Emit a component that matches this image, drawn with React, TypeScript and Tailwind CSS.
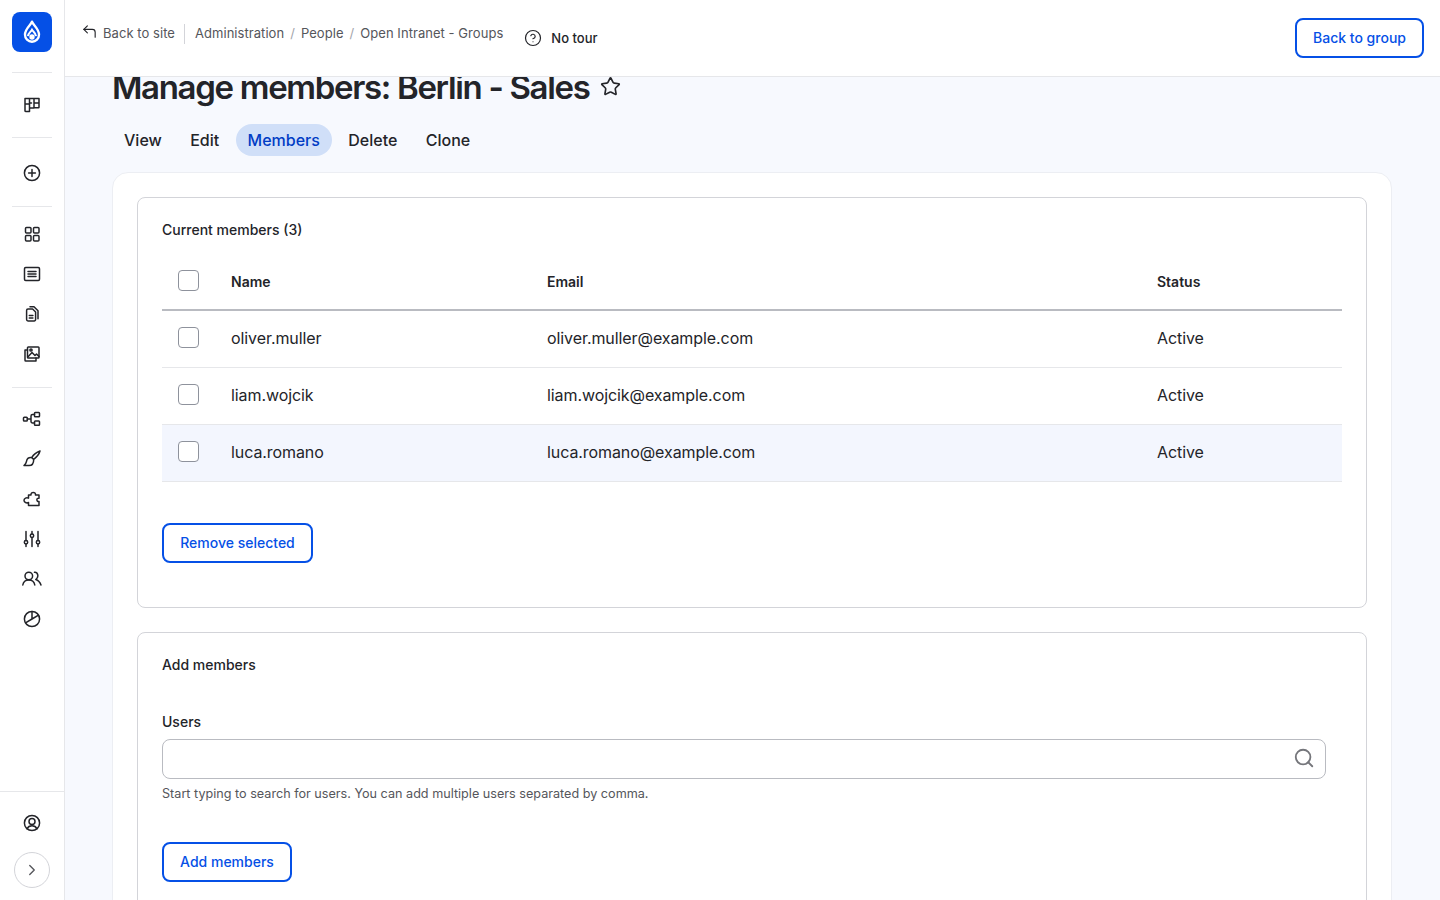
import React from 'react';
import { ChevronRight, CircleHelp, CornerUpLeft, Search, Star } from 'lucide-react';

const members = [
  { name: 'oliver.muller', email: 'oliver.muller@example.com', highlight: false },
  { name: 'liam.wojcik', email: 'liam.wojcik@example.com', highlight: false },
  { name: 'luca.romano', email: 'luca.romano@example.com', highlight: true },
];

const tabs = ['View', 'Edit', 'Members', 'Delete', 'Clone'];

const Icon = ({ children }: { children: React.ReactNode }) => (
  <svg width="20" height="20" viewBox="0 0 20 20" fill="none" stroke="#232429" strokeWidth="1.5" strokeLinecap="round" strokeLinejoin="round">
    {children}
  </svg>
);

const SideItem = ({ children }: { children: React.ReactNode }) => (
  <div className="h-10 flex items-center justify-center">{children}</div>
);

const Checkbox = () => <div className="w-[21px] h-[21px] bg-white border border-[#8e929c] rounded-[4px]" />;

const Button = ({ label, className }: { label: string; className: string }) => (
  <button className={`h-10 border-2 border-[#0550e6] rounded-lg bg-white text-sm font-medium text-[#0550e6] ${className}`}>
    {label}
  </button>
);

export default function App() {
  return (
    <div className="h-screen flex overflow-hidden bg-[#f7f9fe] text-[#232429] font-['Inter',sans-serif]">
      <aside className="w-[65px] shrink-0 flex flex-col bg-white border-r border-[#e6e7ea]">
        <div className="pt-3 px-3 h-[72px]">
          <div className="w-10 h-10 rounded-lg bg-[#0550e6] flex items-center justify-center">
            <svg width="18" height="24" viewBox="0 0 20 26" fill="none">
              <path d="M10 1.5C11 5 17.8 9 17.8 16a7.8 7.8 0 0 1-15.6 0C2.2 9 9 5 10 1.5Z" fill="none" stroke="#fff" strokeWidth="2.6" strokeLinejoin="round" />
              <path d="M5.5 17.5C6 14 9 12.5 10 10.5c1.2 2 4 3.5 4.5 7" stroke="#fff" strokeWidth="2.2" />
              <circle cx="10" cy="18.5" r="3" fill="#fff" />
            </svg>
          </div>
        </div>
        <div className="mx-3 border-t border-[#e6e7ea]" />
        <div className="h-[64px] flex items-center justify-center">
          <Icon>
            <path d="M3 3.5h4.5v13H3.6a.6.6 0 0 1-.6-.6V3.5ZM7.5 3.5H12V13H7.5ZM12 3.5h5v8.7a.6.6 0 0 1-.6.6H12ZM3 9h4.5M12 8h5M7.5 8h2" />
          </Icon>
        </div>
        <div className="mx-3 border-t border-[#e6e7ea]" />
        <div className="h-[68px] pt-[2px] flex items-center justify-center">
          <Icon>
            <circle cx="10" cy="10" r="7.6" />
            <path d="M10 6.6v6.8M6.6 10h6.8" />
          </Icon>
        </div>
        <div className="mx-3 border-t border-[#e6e7ea]" />
        <div className="pt-[7px] pb-[13px]">
          <SideItem>
            <Icon>
              <rect x="3.5" y="3.5" width="5.5" height="5.5" rx="1" />
              <rect x="11.5" y="3.5" width="5.5" height="5.5" rx="1" />
              <rect x="3.5" y="11.5" width="5.5" height="5.5" rx="1" />
              <rect x="11.5" y="11.5" width="5.5" height="5.5" rx="1" />
            </Icon>
          </SideItem>
          <SideItem>
            <Icon>
              <rect x="2.5" y="3.5" width="15" height="13" rx="1.2" />
              <path d="M6 7.5h8M6 10h8M6 12.5h8" />
            </Icon>
          </SideItem>
          <SideItem>
            <Icon>
              <path d="M8 2.8h4l4 4v8M6 5h4.6l3 3v7.6a1.4 1.4 0 0 1-1.4 1.4H6a1.4 1.4 0 0 1-1.4-1.4V6.4A1.4 1.4 0 0 1 6 5Z" />
              <path d="M7.3 11.5h3.6M7.3 14h3.6" />
            </Icon>
          </SideItem>
          <SideItem>
            <Icon>
              <rect x="5.5" y="3" width="11.5" height="11" rx="0.8" />
              <path d="M5.5 6H3v10.2c0 .5.3.8.8.8H14v-3M5.8 13l4.2-4.5 3 3 1.5-1.5 2.5 2.5" />
              <circle cx="9" cy="6" r="1.1" />
            </Icon>
          </SideItem>
        </div>
        <div className="mx-3 border-t border-[#e6e7ea]" />
        <div className="pt-[11px]">
          <SideItem>
            <Icon>
              <rect x="1.5" y="8.2" width="3.8" height="3.8" rx="0.8" />
              <rect x="12.5" y="3.5" width="5" height="4.2" rx="0.8" />
              <rect x="12.5" y="12" width="5" height="4.2" rx="0.8" />
              <path d="M5.3 10H9m3.5-4.5h-2A1.5 1.5 0 0 0 9 7v5.500a1.500 1.500 0 0 0 1.500 1.500h2" />
            </Icon>
          </SideItem>
          <SideItem>
            <Icon>
              <path d="M18 2c-2.400.8-6.600 3.800-8.300 6.600l2 1.800C14.200 8.400 17.300 4.500 18 2ZM9.700 8.600C6.800 8.300 4.900 10 4.500 12.300c-.3 1.600-1.100 2.900-2.500 4.200h5c2.800 0 4.700-2.300 4.700-6.100" />
            </Icon>
          </SideItem>
          <SideItem>
            <Icon>
              <path d="M6.500 6H9c-.5-3.500 5-3.500 4.500 0H17v3.200c-2.800-.6-2.800 3.900 0 3.300v4H6.500v-3c-2 1-4.500-.2-4.500-2.200 0-2 2.500-3.200 4.500-2.200V6Z" />
            </Icon>
          </SideItem>
          <SideItem>
            <Icon>
              <path d="M4 2.500v9M4 15v2.500M10 2.500V5M10 8.500v9M16 2.500v9M16 15v2.500" />
              <circle cx="4" cy="13.200" r="1.700" />
              <circle cx="10" cy="6.800" r="1.700" />
              <circle cx="16" cy="13.200" r="1.700" />
            </Icon>
          </SideItem>
          <SideItem>
            <Icon>
              <circle cx="6.800" cy="7" r="3.800" />
              <path d="M.8 16c.5-3 2.800-5 6-5s5.500 2 6 5M12.500 3.300c3.300-.4 4.800 4.600 1.300 7.200 2.400.8 4.200 2.800 5.200 5.500" />
            </Icon>
          </SideItem>
          <SideItem>
            <Icon>
              <circle cx="10" cy="10" r="7.600" />
              <path d="M10 2.400V10l-6.500 3.800M10 10l6.500-3.800" />
            </Icon>
          </SideItem>
        </div>
        <div className="mt-auto border-t border-[#e6e7ea] h-[109px] flex flex-col items-center pt-[21px]">
          <Icon>
            <circle cx="10" cy="10" r="7.600" />
            <circle cx="10" cy="8.400" r="3" />
            <path d="M5 15.800c1-2 2.800-3 5-3s4 1 5 3" />
          </Icon>
          <div className="mt-[19px] w-9 h-9 rounded-full bg-white border border-[#d3d4d9] flex items-center justify-center">
            <ChevronRight size={18} strokeWidth={1.8} color="#55565b" />
          </div>
        </div>
      </aside>

      <main className="flex-1 min-w-0 flex flex-col">
        <header className="relative z-10 h-[77px] shrink-0 bg-white border-b border-[#e6e7ea] pl-4 pr-4 flex items-start justify-between">
          <div className="flex items-start">
            <div className="flex items-center h-5 mt-[24px] text-[13px] text-[#55565b] tracking-[0.004em]">
              <CornerUpLeft size={17} strokeWidth={1.6} color="#232429" className="-mt-[5px] mr-[5px]" />
              <span>Back to site</span>
              <span className="h-5 mx-[9.5px] border-l border-[#d3d4d9]" />
              <span>Administration</span>
              <span className="mx-[6px] text-[#a3a5ab]">/</span>
              <span>People</span>
              <span className="mx-[6px] text-[#a3a5ab]">/</span>
              <span>Open Intranet - Groups</span>
            </div>
            <div className="ml-[21px] mt-[29px] h-5 flex items-center gap-[9px] text-[13px] font-medium">
              <CircleHelp size={18} strokeWidth={1.6} className="-mt-[2px]" />
              <span>No tour</span>
            </div>
          </div>
          <button className="mt-[18px] w-[129px] h-10 border-2 border-[#0550e6] rounded-lg text-sm font-medium text-[#0550e6]">
            Back to group
          </button>
        </header>

        <div className="pl-[47px] pr-[48px]">
          <div className="-mt-[12px] h-11 flex items-center">
            <h1 className="text-[33px] leading-[44px] font-semibold tracking-[-0.04em]">Manage members: Berlin - Sales</h1>
            <Star size={21} strokeWidth={1.9} className="ml-[10px] -mt-[1px]" />
          </div>
          <nav className="mt-[15px] flex gap-[4.4px]">
            {tabs.map((tab) => (
              <div
                key={tab}
                className={`h-8 px-3 flex items-center rounded-full text-base font-medium ${tab === 'Members' ? 'bg-[#d0dff8] text-[#003cc5]' : ''}`}
              >
                {tab}
              </div>
            ))}
          </nav>

          <div className="mt-4 bg-white border border-[#eceef3] rounded-2xl p-6 pb-0 flex flex-col gap-6">
            <section className="h-[411px] border border-[#d3d4d9] rounded-lg px-6 pt-[23px] flex flex-col">
              <h2 className="text-sm leading-[17px] font-medium">Current members (3)</h2>
              <div className="mt-6 h-[49px] grid grid-cols-[53px_316px_610px_1fr] border-b-2 border-[#b9bbc1] text-sm font-semibold">
                <div className="pl-4 pt-2"><Checkbox /></div>
                <div className="pl-4 pt-[10px]">Name</div>
                <div className="pl-4 pt-[10px]">Email</div>
                <div className="pl-4 pt-[10px]">Status</div>
              </div>
              {members.map((m) => (
                <div
                  key={m.name}
                  className={`h-[57px] pb-[2px] grid grid-cols-[53px_316px_610px_1fr] items-center border-b border-[#e6e7ea] text-base tracking-[-0.005em] ${m.highlight ? 'bg-[#f3f6fe]' : ''}`}
                >
                  <div className="pl-4 -mt-[2px]"><Checkbox /></div>
                  <div className="pl-4">{m.name}</div>
                  <div className="pl-4">{m.email}</div>
                  <div className="pl-4">Active</div>
                </div>
              ))}
              <Button label="Remove selected" className="mt-[41px] w-[151px]" />
            </section>

            <section className="h-[400px] border border-[#d3d4d9] rounded-lg px-6 pt-[23px]">
              <h2 className="text-sm leading-[17px] font-medium">Add members</h2>
              <label className="block mt-10 text-sm leading-[17px] font-medium">Users</label>
              <div className="mt-[9px] w-[1164px] h-10 border border-[#b9bbc1] rounded-lg flex items-center justify-end pr-[10px]">
                <Search size={22} strokeWidth={2} color="#75767b" className="-mt-[2px]" />
              </div>
              <p className="mt-[7px] text-[12.64px] leading-[16px] text-[#55565b]">
                Start typing to search for users. You can add multiple users separated by comma.
              </p>
              <Button label="Add members" className="mt-10 w-[130px]" />
            </section>
          </div>
        </div>
      </main>
    </div>
  );
}
